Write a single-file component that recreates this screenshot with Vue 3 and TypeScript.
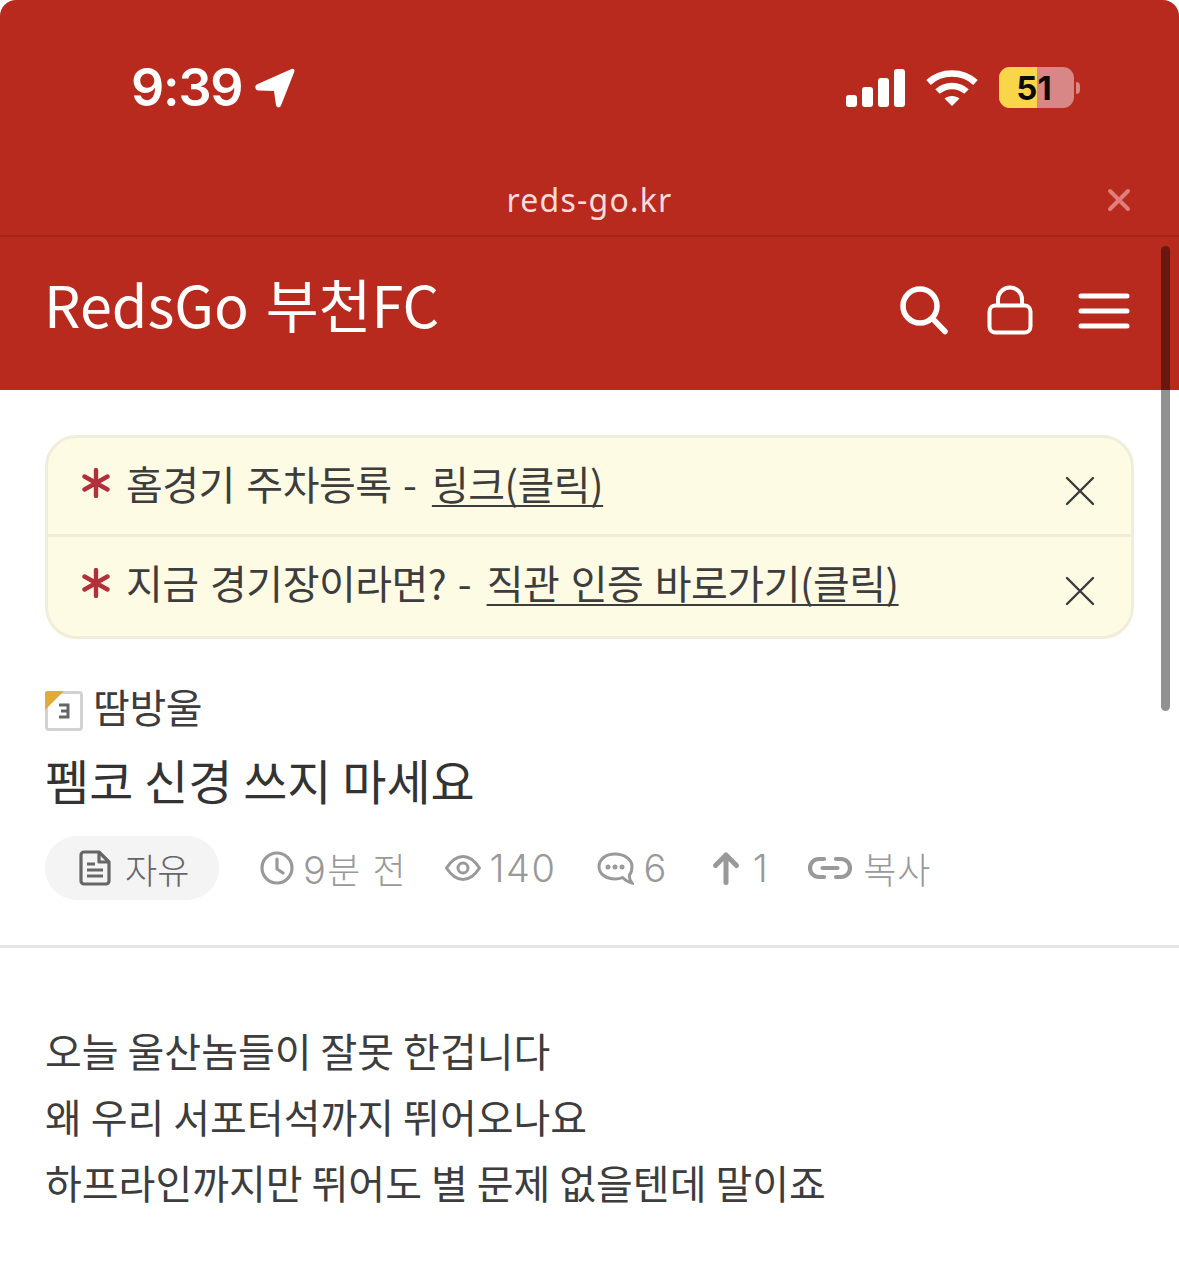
<script setup lang="ts">
const notices = [
  { id: 1, text: '홈경기 주차등록 - ', link: '링크(클릭)' },
  { id: 2, text: '지금 경기장이라면? - ', link: '직관 인증 바로가기(클릭)' },
]

const lines = ['오늘 울산놈들이 잘못 한겁니다', '왜 우리 서포터석까지 뛰어오나요', '하프라인까지만 뛰어도 별 문제 없을텐데 말이죠']
</script>

<template>
  <div class="page">
    <header class="red">
      <div class="status">
        <div class="time">
          <span>9:39</span>
          <svg width="40" height="41" viewBox="0 0 40 41"><path d="M36.500 1c2-.8 3.600 1 2.800 2.800L26 37.500c-1.200 2.800-4.600 2.400-5-.6L19 23l-15.500-.5c-3.500-.2-4.400-4.800-1.200-6.200z" fill="#fff" /></svg>
        </div>
        <div class="status-right">
          <svg width="60" height="38" viewBox="0 0 60 38" fill="#fff">
            <rect x="0" y="26" width="11" height="12" rx="3" />
            <rect x="16" y="18" width="11" height="20" rx="3" />
            <rect x="32" y="9" width="11" height="29" rx="3" />
            <rect x="48" y="0" width="11" height="38" rx="3" />
          </svg>
          <svg width="52" height="38" viewBox="0 0 52 38" fill="none" stroke="#fff" stroke-width="6.500">
            <path d="M2.500 13.500C15.500 1.500 36.500 1.500 49.500 13.500" />
            <path d="M11.500 22.500C19.500 15 32.500 15 40.500 22.500" />
            <path d="M26 37l-7.500-7.500c4-3.500 11-3.500 15 0z" fill="#fff" stroke="none" />
          </svg>
          <div class="battery">
            <div class="cell"><i class="level"></i><b>51</b></div>
            <i class="nub"></i>
          </div>
        </div>
      </div>
      <div class="address">
        <span>reds-go.kr</span>
        <svg class="addr-close" width="24" height="24" viewBox="0 0 24 24"><path d="M3 3l18 18M21 3L3 21" stroke="#e07d7d" stroke-width="4" stroke-linecap="round" /></svg>
      </div>
      <div class="navbar">
        <div class="brand">RedsGo 부천FC</div>
        <div class="nav-icons">
          <svg width="50" height="50" viewBox="0 0 50 50" fill="none" stroke="#fff" stroke-width="5.500" stroke-linecap="round"><circle cx="21" cy="20" r="17" /><path d="M33.500 32.500 46 45.500" /></svg>
          <svg width="46" height="52" viewBox="0 0 46 52" fill="none" stroke="#fff" stroke-width="4"><rect x="2.500" y="20.500" width="41" height="27" rx="6" /><path d="M11 20.500V14.500a12 12 0 0 1 24 0v6" /></svg>
          <svg class="menu" width="52" height="38" viewBox="0 0 52 38" fill="none" stroke="#fff" stroke-width="5" stroke-linecap="round"><path d="M3 4h46M3 19h46M3 34h46" /></svg>
        </div>
      </div>
    </header>

    <main>
      <ul class="notice">
        <li v-for="n in notices" :key="n.id">
          <svg class="star" width="28" height="30" viewBox="0 0 28 30" stroke="#b0303b" stroke-width="4.400" stroke-linecap="round"><path d="M14 2v26M2.500 8.500l23 13M25.500 8.500l-23 13" /></svg>
          <span class="notice-text">{{ n.text }}<u>{{ n.link }}</u></span>
          <svg class="x" width="30" height="30" viewBox="0 0 30 30" stroke="#3a3a3a" stroke-width="2.400" stroke-linecap="round"><path d="M2 2l26 26M28 2 2 28" /></svg>
        </li>
      </ul>

      <div class="author">
        <svg class="level-icon" width="38" height="40" viewBox="0 0 38 40">
          <rect x="1.500" y="1.500" width="35" height="37" rx="2.500" fill="#fff" stroke="#d2d2d2" stroke-width="3" />
          <path d="M0 2.500A2.500 2.500 0 0 1 2.500 0H19L0 19z" fill="#e2a93b" />
          <path d="M14 14h9v12h-9M16 20h7" fill="none" stroke="#666" stroke-width="3" />
        </svg>
        <span>땀방울</span>
      </div>
      <h1>펨코 신경 쓰지 마세요</h1>

      <div class="meta">
        <div class="category">
          <svg width="32" height="36" viewBox="0 0 32 36" fill="none" stroke="#666" stroke-width="3.200" stroke-linejoin="round"><path d="M5 2h15l10 10v19a3 3 0 0 1-3 3H5a3 3 0 0 1-3-3V5a3 3 0 0 1 3-3z" /><path d="M20 2v10h10M8 14h8M8 20h16M8 26h16" /></svg>
          <span>자유</span>
        </div>
        <div class="item i-time">
          <svg width="34" height="34" viewBox="0 0 34 34" fill="none" stroke="#999" stroke-width="3.200" stroke-linecap="round" stroke-linejoin="round"><circle cx="17" cy="17" r="15" /><path d="M17 8v10l6 4" /></svg>
          <span><span class="num">9</span>분 전</span>
        </div>
        <div class="item i-view">
          <svg width="36" height="26" viewBox="0 0 36 26" fill="none" stroke="#999" stroke-width="3"><path d="M1.500 13C7 4.500 12 1.500 18 1.500S29 4.500 34.500 13C29 21.500 24 24.500 18 24.500S7 21.500 1.500 13z" /><circle cx="18" cy="13" r="5" /></svg>
          <span class="num">140</span>
        </div>
        <div class="item i-comment">
          <svg width="37" height="33" viewBox="0 0 37 33" fill="none" stroke="#999" stroke-width="3"><path d="M18 2C9 2 2 7 2 14.500S9 27 18 27c3.500 0 5.500-.5 7.500-1.500 2 2 5 4.500 9.500 5.500-2-2.500-3-5-2.500-8 1.500-2 2.500-5 2.500-8.500C35 7 27 2 18 2z" /><circle cx="11" cy="15" r="1" fill="#999" /><circle cx="18" cy="15" r="1" fill="#999" /><circle cx="25" cy="15" r="1" fill="#999" /></svg>
          <span class="num">6</span>
        </div>
        <div class="item i-up">
          <svg width="30" height="34" viewBox="0 0 30 34" fill="none" stroke="#999" stroke-width="5" stroke-linecap="round" stroke-linejoin="round"><path d="M15 31.500V5M4.500 14.500 15 4l10.500 10.500" /></svg>
          <span class="num">1</span>
        </div>
        <div class="item i-link">
          <svg width="46" height="24" viewBox="0 0 46 24" fill="none" stroke="#999" stroke-width="4.200" stroke-linecap="round"><path d="M17 3H12a9 9 0 0 0 0 18h5M29 3h5a9 9 0 0 1 0 18h-5M15.500 12h15" /></svg>
          <span>복사</span>
        </div>
      </div>
      <hr />

      <article>
        <p v-for="line in lines" :key="line">{{ line }}</p>
      </article>
    </main>

    <div class="scrollbar"></div>
  </div>
</template>

<style>
html,
body {
  margin: 0;
  background: #fff;
  overflow: hidden;
}
</style>

<style scoped>
.page {
  position: relative;
  width: 1179px;
  height: 1269px;
  overflow: hidden;
  font-family: "Noto Sans CJK KR", "Noto Sans", sans-serif;
  color: #3a3a3a;
}

.red {
  height: 390px;
  background: #b82a1e;
  border-radius: 16px 16px 0 0;
  color: #fff;
}

.status {
  height: 170px;
  padding: 0 102px 0 131px;
  box-sizing: border-box;
  display: flex;
  justify-content: space-between;
  align-items: flex-start;
}

.time {
  display: flex;
  align-items: center;
  gap: 13px;
  margin-top: 58px;
  font-family: Inter, "Liberation Sans", sans-serif;
  font-size: 52px;
  font-weight: 600;
  line-height: 60px;
  letter-spacing: -1.2px;
}

.status-right {
  display: flex;
  align-items: center;
  gap: 20px;
  margin-top: 67px;
}

.battery {
  display: flex;
  align-items: center;
  gap: 2px;
  margin-left: 1px;
  margin-right: -3px;
}

.cell {
  position: relative;
  width: 75px;
  height: 41px;
  border-radius: 11px;
  overflow: hidden;
  background: #d88686;
  display: flex;
  align-items: center;
  justify-content: center;
}

.level {
  position: absolute;
  left: 0;
  top: 0;
  bottom: 0;
  width: 38px;
  background: #f9d54a;
}

.cell b {
  position: relative;
  margin-right: 5px;
  font-family: Inter, "Liberation Sans", sans-serif;
  font-size: 33px;
  font-weight: 700;
  color: #0b0b0b;
}

.nub {
  width: 4px;
  height: 12px;
  background: #d88686;
  border-radius: 0 4px 4px 0;
}

.address {
  position: relative;
  height: 65px;
  border-bottom: 2px solid #a82419;
  display: flex;
  align-items: center;
  justify-content: center;
  font-family: "Noto Sans", sans-serif;
  font-size: 32px;
  letter-spacing: 1.2px;
  color: #f7dcd9;
}

.address span {
  margin-top: -6px;
}

.addr-close {
  position: absolute;
  right: 48px;
  top: 18px;
}

.navbar {
  height: 153px;
  padding: 0 49px 0 44px;
  display: flex;
  align-items: center;
  justify-content: space-between;
}

.brand {
  margin-top: -4px;
  margin-bottom: 18px;
  font-size: 57.500px;
  line-height: 70px;
  font-weight: 400;
  word-spacing: 4px;
}

.nav-icons {
  display: flex;
  align-items: center;
  gap: 38px;
  margin-bottom: 6px;
}

.menu {
  margin-left: 7px;
}

.notice {
  list-style: none;
  margin: 45px 45px 0;
  padding: 0;
  background: #fefbe4;
  border: 3px solid #f0eddb;
  border-radius: 32px;
}

.notice li {
  height: 96px;
  display: flex;
  align-items: center;
  padding: 0 36px 0 34px;
  font-size: 40px;
  color: #3d3d3d;
}

.notice li + li {
  height: 97px;
  padding-bottom: 2px;
  border-top: 3px solid #f0eddb;
}

.notice-text {
  flex: 1;
  margin-left: 16px;
  margin-top: -7px;
  letter-spacing: -0.5px;
  word-spacing: 3px;
}

.notice-text u {
  margin-left: 4px;
  text-decoration-thickness: 2px;
  text-underline-offset: 5px;
  text-decoration-skip-ink: none;
}

.star {
  margin-top: -6px;
}

.x {
  margin-top: 10px;
}

.author {
  display: flex;
  align-items: center;
  gap: 10px;
  margin: 42px 45px 0;
  font-size: 40px;
  line-height: 50px;
  letter-spacing: -0.4px;
  color: #3d3d3d;
}

.level-icon {
  margin-top: 9px;
}

h1 {
  margin: 15px 45px 0;
  font-size: 48px;
  line-height: 66px;
  font-weight: 400;
  color: #333;
}

.meta {
  display: flex;
  align-items: center;
  margin: 24px 45px 0;
  height: 64px;
  font-size: 36px;
  font-weight: 300;
  letter-spacing: 1px;
  color: #999;
}

.num {
  font-family: Inter, sans-serif;
  font-size: 38px;
  font-weight: 300;
  letter-spacing: 1.5px;
}

.category {
  display: flex;
  align-items: center;
  gap: 14px;
  width: 174px;
  height: 64px;
  box-sizing: border-box;
  padding-left: 34px;
  border-radius: 32px;
  background: #f4f4f4;
  font-size: 35px;
  letter-spacing: 0;
  color: #666;
}

.item {
  display: flex;
  align-items: center;
  gap: 9px;
}

.i-time {
  margin-left: 41px;
  letter-spacing: 0;
  word-spacing: 4px;
}

.i-view {
  margin-left: 39px;
}

.i-comment {
  margin-left: 41px;
}

.i-up {
  margin-left: 43px;
  gap: 12px;
}

.i-link {
  margin-left: 38px;
  gap: 10px;
}

hr {
  margin: 45px 0 0;
  border: 0;
  height: 3px;
  background: #e6e6e6;
}

article {
  margin: 69px 45px 0;
}

article p {
  margin: 0;
  font-size: 40px;
  line-height: 66px;
  color: #3d3d3d;
}

.scrollbar {
  position: absolute;
  left: 1161px;
  top: 246px;
  width: 9px;
  height: 465px;
  border-radius: 5px;
  background: rgba(0, 0, 0, 0.43);
}
</style>
